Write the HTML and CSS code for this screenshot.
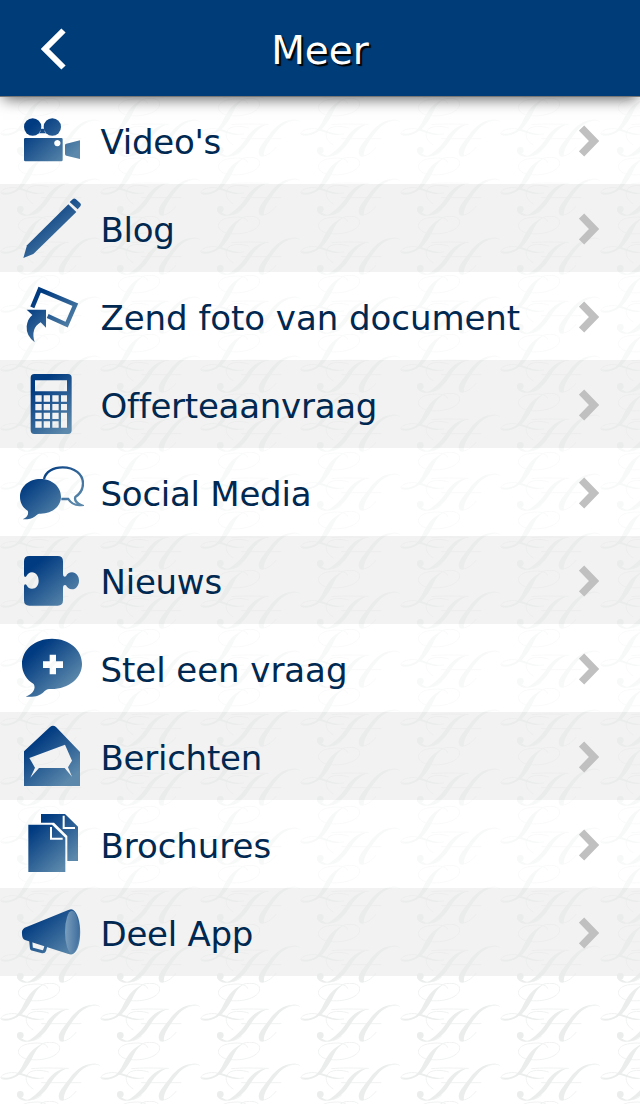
FILE: index.html
```html
<!DOCTYPE html>
<html lang="nl">
<head>
<meta charset="utf-8">
<title>Meer</title>
<link rel="stylesheet" href="styles.css">
</head>
<body>
<svg class="defs" width="0" height="0" aria-hidden="true">
  <defs>
    <linearGradient id="blueA" gradientUnits="userSpaceOnUse" x1="105" y1="80" x2="205" y2="190"><stop offset="0" stop-color="#003a80"/><stop offset="1" stop-color="#5b88ab"/></linearGradient>
    <linearGradient id="blueB" gradientUnits="userSpaceOnUse" x1="105" y1="350" x2="205" y2="470"><stop offset="0" stop-color="#003a80"/><stop offset="1" stop-color="#5b88ab"/></linearGradient>
    <linearGradient id="cone" x1="0" y1="0" x2="1" y2="0"><stop offset="0" stop-color="#7b9fbd"/><stop offset="1" stop-color="#406f9e"/></linearGradient>
  </defs>
</svg>
<header class="bar">
  <button class="back" aria-label="Terug"><svg width="26" height="42" viewBox="0 0 26 42"><path d="M22.5 2.5 4 21l18.5 18.5" fill="none" stroke="#fff" stroke-width="6"/></svg></button>
  <h1 class="title">Meer</h1>
</header>
<main class="menu">
  <a class="row">
    <svg class="icon" viewBox="60 36 192 192" fill="url(#blueA)"><circle cx="98" cy="93" r="26"/><circle cx="157" cy="93" r="26"/><path d="M121 98h13v9l5 5h-23l5-5z"/><path fill-rule="evenodd" d="M76 126h108q4 0 4 4v62q0 4-4 4H76q-4 0-4-4v-62q0-4 4-4zm96 6a9.500 9.500 0 1 0 .1 0z"/><path d="M199 143l41-10v56l-41-10q-4-1-4-5v-26q0-4 4-5z"/></svg>
    <span class="label">Video's</span><svg class="chev" viewBox="0 0 20 32"><path d="M2.500 3 15 16 2.500 29"/></svg>
  </a>
  <a class="row">
    <svg class="icon" viewBox="60 300 192 192" fill="url(#blueB)"><path d="M205 325l24 23L100 474l-30 12 11-38z"/><path d="M218 310q4-5 9-1l14 13q4 4 0 9l-8 9-24-22z"/></svg>
    <span class="label">Blog</span><svg class="chev" viewBox="0 0 20 32"><path d="M2.500 3 15 16 2.500 29"/></svg>
  </a>
  <a class="row">
    <svg class="icon" viewBox="60 36 192 192" fill="url(#blueA)"><path d="M97 106l22-53 107 45-26 60-57-26" fill="none" stroke="url(#blueA)" stroke-width="13"/><path d="M80 113h58v54l-16-16q-31 18-18 60-26-20-24-48 3-23 17-34z"/></svg>
    <span class="label wide">Zend foto van document</span><svg class="chev" viewBox="0 0 20 32"><path d="M2.500 3 15 16 2.500 29"/></svg>
  </a>
  <a class="row">
    <svg class="icon" viewBox="60 300 192 192" fill="url(#blueB)"><path fill-rule="evenodd" d="M103 306h101q11 0 11 11v158q0 11-11 11H103q-11 0-11-11V317q0-11 11-11zM105 325v33h96v-33zM106 370v19h19v-19zm25 0v19h19v-19zm26 0v19h19v-19zm26 0v19h18v-19zM106 396v19h19v-19zm25 0v19h19v-19zm26 0v19h19v-19zm26 0v19h18v-19zM106 422v19h19v-19zm25 0v19h19v-19zm26 0v19h19v-19zm26 0v45h18v-45zM106 448v19h19v-19zm25 0v19h19v-19zm26 0v19h19v-19z"/></svg>
    <span class="label">Offerteaanvraag</span><svg class="chev" viewBox="0 0 20 32"><path d="M2.500 3 15 16 2.500 29"/></svg>
  </a>
  <a class="row">
    <svg class="icon" viewBox="60 36 192 192" fill="url(#blueA)"><path d="M121 93c35 0 62 23 62 53 0 31-30 53-66 51-10 3-14 18-49 17 14-5 19-17 15-26-15-9-23-24-23-41 0-31 27-54 61-54z"/><path d="M132 93c5-22 27-35 56-35 35 0 61 21 61 48 0 18-9 32-23 41-3 9 4 18 17 24-22 2-32-8-38-18l-21 0" fill="none" stroke="url(#blueA)" stroke-width="7"/></svg>
    <span class="label">Social Media</span><svg class="chev" viewBox="0 0 20 32"><path d="M2.500 3 15 16 2.500 29"/></svg>
  </a>
  <a class="row">
    <svg class="icon" viewBox="60 300 192 192" fill="url(#blueB)"><path d="M88 324h85q16 0 16 16v38q0 11 9 7c3-8 10-12 18-12 12 0 21 11 21 25s-9 26-21 26c-9 0-15-5-18-12q-9-4-9 7v38q0 16-16 16H88q-16 0-16-16v-43q1-8 7-4c3 7 9 12 17 12 12 0 20-10 20-24s-8-25-20-25c-8 0-14 5-17 12q-6 5-7-4v-41q0-16 16-16z"/></svg>
    <span class="label">Nieuws</span><svg class="chev" viewBox="0 0 20 32"><path d="M2.500 3 15 16 2.500 29"/></svg>
  </a>
  <a class="row">
    <svg class="icon" viewBox="60 36 192 192" fill="url(#blueA)"><path fill-rule="evenodd" d="M156 44c51 0 90 33 90 76s-42 78-99 75c-20 2-14 27-70 23 22-8 32-24 24-38-21-12-35-34-35-60 0-43 39-76 90-76zM149 92v20h-20v20h20v19h19v-19h21v-20h-21V92z"/></svg>
    <span class="label wide">Stel een vraag</span><svg class="chev" viewBox="0 0 20 32"><path d="M2.500 3 15 16 2.500 29"/></svg>
  </a>
  <a class="row">
    <svg class="icon" viewBox="60 300 192 192" fill="url(#blueB)"><path fill-rule="evenodd" d="M150 309q9-7 18 0l72 75v102H72V382zM88 402l107-40 21 48-12 20 12 28-22-26h-77l-26 29 14-30z"/></svg>
    <span class="label">Berichten</span><svg class="chev" viewBox="0 0 20 32"><path d="M2.500 3 15 16 2.500 29"/></svg>
  </a>
  <a class="row">
    <svg class="icon" viewBox="60 36 192 192" fill="url(#blueA)"><path d="M123 42h72l39 38v103h-32v-75l-40-40h-39z"/><path d="M191 47v37h34" fill="none" stroke="#fff" stroke-width="6"/><path d="M85 74h71l40 39v103H85z"/><path d="M153 81v35h35" fill="none" stroke="#fff" stroke-width="6"/></svg>
    <span class="label wide">Brochures</span><svg class="chev" viewBox="0 0 20 32"><path d="M2.500 3 15 16 2.500 29"/></svg>
  </a>
  <a class="row">
    <svg class="icon" viewBox="60 300 192 192" fill="url(#blueB)"><path d="M74 383l131-53q8-4 14-1c29 18 29 118 0 133q-6 3-16-1L75 420q-9-3-9-18-2-13 8-19z"/><path d="M92 420l2 23q0 4 5 5l28 7q5 1 7-4l4-14" fill="none" stroke="url(#blueB)" stroke-width="9"/><ellipse cx="216" cy="396" rx="21" ry="64" fill="url(#cone)"/></svg>
    <span class="label">Deel App</span><svg class="chev" viewBox="0 0 20 32"><path d="M2.500 3 15 16 2.500 29"/></svg>
  </a>
</main>
</body>
</html>
```
FILE: styles.css
```css
body {
  margin: 0;
  min-height: 1104px;
  font-family: Verdana, "DejaVu Sans", sans-serif;
  background-color: #fff;
  background-image: url("data:image/svg+xml,%3Csvg xmlns='http://www.w3.org/2000/svg' width='100' height='59' viewBox='0 8 300 177' preserveAspectRatio='none'%3E%3Cg fill='none' stroke='%23f0f1f1' stroke-width='3' stroke-linecap='round'%3E%3Cpath d='M143 24C139 9 108 9 82 14 43 23 47 57 92 61 139 65 181 47 179 25 178 9 153 6 132 11M52 101C28 96 4 105 2 115 10 126 43 118 58 103 68 101 95 122 131 116M145 98C131 92 86 87 79 111 76 128 87 142 99 148M95 88C123 85 166 86 205 87M125 130H243M65 181C88 184 108 182 124 168M298 78C294 72 269 71 240 94M180 181C197 187 216 171 228 156'/%3E%3C/g%3E%3Cg fill='%23ebeded'%3E%3Cpath d='M135 10C112 22 105 38 95 60 84 80 68 102 58 107L50 104C62 92 68 76 78 58 92 34 108 20 135 10Z'/%3E%3Cpath d='M4 117C23 123 43 118 60 104L54 101C41 113 22 118 4 114Z'/%3E%3Cpath d='M60 102C78 103 97 118 121 117 100 123 78 111 60 106Z'/%3E%3Cpath d='M205 87C182 92 166 110 152 132 133 162 112 183 80 184 92 178 118 160 138 130 152 108 172 88 205 87Z'/%3E%3Ccircle cx='61' cy='165' r='10'/%3E%3Cpath d='M51 166C51 176 62 184 82 184L72 178Z'/%3E%3Cpath d='M290 74C258 72 239 94 213 130 201 148 189 167 192 182 180 189 172 175 178 160 186 145 202 125 219 104 242 80 265 70 290 74Z'/%3E%3C/g%3E%3C/svg%3E");
  background-position: 0 39px;
}
.defs { display: block; }
.bar {
  position: relative;
  display: grid;
  grid-template-columns: 108px 1fr 108px;
  align-items: center;
  height: 96px;
  background: #003c78;
  box-shadow: 0 1px 0 #777, 0 6px 14px -3px rgba(0, 0, 0, .62);
}
.back {
  display: flex;
  padding: 2px 0 0 41px;
  border: 0;
  background: none;
}
.title {
  margin: 0;
  padding: 5px 0 0;
  font-size: 39px;
  font-weight: 400;
  line-height: 48px;
  text-align: center;
  color: #fff;
  text-shadow: 2px 2px 1px #000;
}
.row {
  display: flex;
  align-items: center;
  box-sizing: border-box;
  height: 88px;
  padding: 0 41px 0 20px;
  background: rgba(255, 255, 255, .6);
}
.row:nth-child(even) { background: rgba(233, 233, 233, .6); }
.icon {
  flex: none;
  width: 64px;
  height: 64px;
}
.label {
  flex: 1;
  padding: 4px 0 0 16.500px;
  font-size: 34px;
  line-height: 44px;
  letter-spacing: -0.25px;
  white-space: nowrap;
  color: #002850;
}
.label.wide { letter-spacing: -0.05px; }
.chev {
  flex: none;
  width: 20px;
  height: 32px;
  margin-top: 2px;
  fill: none;
  stroke: #c0c0c0;
  stroke-width: 7.500;
}
```
